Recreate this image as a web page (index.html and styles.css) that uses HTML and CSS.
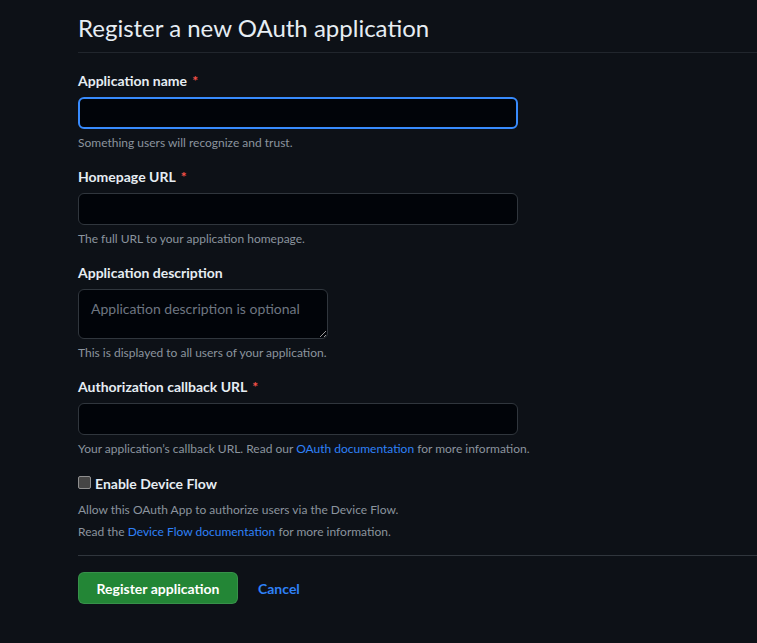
FILE: index.html
```html
<!DOCTYPE html>
<html lang="en">
<head>
<meta charset="utf-8">
<title>Register a new OAuth application</title>
<link rel="stylesheet" href="styles.css">
</head>
<body>
<main class="page">
  <h1 class="title">Register a new OAuth application</h1>
  <form class="form">
    <div class="group">
      <label class="label">Application name <span class="req">*</span></label>
      <input class="input focused" type="text">
      <p class="note">Something users will recognize and trust.</p>
    </div>
    <div class="group">
      <label class="label">Homepage URL <span class="req">*</span></label>
      <input class="input" type="text">
      <p class="note">The full URL to your application homepage.</p>
    </div>
    <div class="group">
      <label class="label">Application description</label>
      <textarea class="textarea" placeholder="Application description is optional"></textarea>
      <p class="note">This is displayed to all users of your application.</p>
    </div>
    <div class="group">
      <label class="label">Authorization callback URL <span class="req">*</span></label>
      <input class="input" type="text">
      <p class="note">Your application’s callback URL. Read our <a class="link" href="#">OAuth documentation</a> for more information.</p>
    </div>
    <div class="check-group">
      <label class="check-label"><input class="checkbox" type="checkbox"> Enable Device Flow</label>
      <p class="check-note">Allow this OAuth App to authorize users via the Device Flow.</p>
      <p class="check-note">Read the <a class="link" href="#">Device Flow documentation</a> for more information.</p>
    </div>
    <div class="actions">
      <button class="btn-primary" type="button">Register application</button>
      <a class="cancel" href="#">Cancel</a>
    </div>
  </form>
</main>
</body>
</html>
```
FILE: styles.css
```css
html, body {
  margin: 0;
  background: #0d1117;
}
body {
  font-family: Lato, "Noto Sans", "Liberation Sans", sans-serif;
  color: #e6edf3;
  font-size: 14px;
  line-height: 1.5;
}
.page {
  padding: 12px 0 0 78px;
  overflow: hidden;
}
.title {
  margin: 0;
  font-size: 24px;
  font-weight: 400;
  line-height: 32px;
  padding-bottom: 8px;
  border-bottom: 1px solid #21262d;
}
.form {
  padding-top: 17px;
}
.group {
  margin-bottom: 14px;
}
.label {
  display: block;
  font-weight: 700;
  font-size: 14px;
  line-height: 21px;
  margin-bottom: 6px;
}
.req {
  color: #f85149;
  margin-left: 2px;
}
.input {
  display: block;
  box-sizing: border-box;
  width: 440px;
  height: 32px;
  margin: 0;
  background: #010409;
  border: 1px solid #30363d;
  border-radius: 6px;
  color: #e6edf3;
  padding: 5px 12px;
  font: inherit;
  outline: none;
}
.input.focused {
  border: 2px solid #388bfd;
}
.textarea {
  display: block;
  box-sizing: border-box;
  width: 250px;
  height: 50px;
  margin: 0;
  background: #010409;
  border: 1px solid #30363d;
  border-radius: 6px;
  color: #e6edf3;
  padding: 9px 12px;
  font: inherit;
  line-height: 20px;
  outline: none;
}
.textarea::placeholder {
  color: #6e7681;
}
.note {
  margin: 5px 0 0;
  font-size: 12px;
  line-height: 18px;
  color: #8b949e;
}
.link {
  color: #2f81f7;
  text-decoration: none;
}
.check-group {
  padding-top: 1px;
  padding-bottom: 15px;
  border-bottom: 1px solid #30363d;
}
.check-label {
  display: flex;
  align-items: center;
  gap: 4px;
  font-weight: 700;
  line-height: 21px;
}
.checkbox {
  appearance: none;
  -webkit-appearance: none;
  width: 13px;
  height: 13px;
  margin: 0;
  background: #454545;
  border: 1px solid #8f8f8f;
  border-radius: 2px;
  position: relative;
  top: -1px;
}
.check-note {
  margin: 7px 0 0;
  font-size: 12px;
  line-height: 17px;
  color: #8b949e;
}
.check-note + .check-note {
  margin-top: 5px;
}
.actions {
  display: flex;
  align-items: center;
  gap: 20px;
  padding-top: 16px;
}
.btn-primary {
  box-sizing: border-box;
  width: 160px;
  height: 32px;
  background: #238636;
  color: #ffffff;
  border: 1px solid rgba(240, 246, 252, 0.1);
  border-radius: 6px;
  font: inherit;
  font-weight: 700;
  padding: 0 8px;
  white-space: nowrap;
}
.cancel {
  color: #2f81f7;
  font-weight: 700;
  text-decoration: none;
}
```
